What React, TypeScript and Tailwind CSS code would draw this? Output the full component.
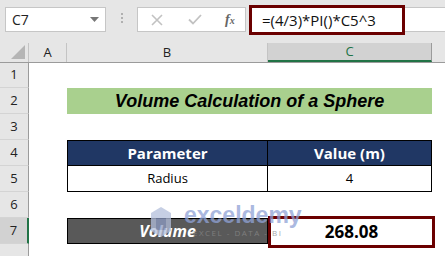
import * as React from "react";

const rows = [1, 2, 3, 4, 5, 6, 7];

function RowHead({ n, h }: { n: number; h: string }) {
  const sel = n === 7;
  return (
    <div
      className={`${h} flex items-center justify-center border-b border-[#d4d4d4] text-[13px] text-[#222] ${
        sel ? "bg-[#d2d2d2] border-r-2 border-r-[#217346]" : "bg-[#e6e6e6] border-r border-r-[#9b9b9b]"
      }`}
    >
      {n}
    </div>
  );
}

export default function App() {
  return (
    <div className="w-[445px] h-[256px] overflow-hidden bg-white relative font-['Open_Sans',sans-serif] select-none">
      {/* formula bar */}
      <div className="h-[43px] bg-[#e6e6e6] flex items-start">
        <div className="ml-[5px] mt-[7px] w-[101px] h-[25px] bg-white border border-[#c6c6c6] flex items-center justify-between px-[6px] text-[14px] text-[#222]">
          <span>C7</span>
          <svg width="9" height="5" viewBox="0 0 9 5"><path d="M0 0h9L4.5 5z" fill="#777" /></svg>
        </div>
        <div className="w-[31px] mt-[13px] flex flex-col items-center gap-[2px]">
          <span className="w-[2px] h-[2px] bg-[#b0b0b0]" />
          <span className="w-[2px] h-[2px] bg-[#b0b0b0]" />
          <span className="w-[2px] h-[2px] bg-[#b0b0b0]" />
        </div>
        <div className="mt-[7px] w-[109px] h-[25px] bg-white border border-[#c6c6c6] flex items-center pl-[13px]">
          <svg width="12" height="12" viewBox="0 0 12 12"><path d="M1 1l10 10M11 1L1 11" stroke="#c2c2c2" strokeWidth="1.6" /></svg>
          <svg className="ml-[25px]" width="14" height="11" viewBox="0 0 14 11"><path d="M1 5.5l4 4L13 1" stroke="#c2c2c2" strokeWidth="1.8" fill="none" /></svg>
          <span className="ml-[23px] text-[14px] italic font-['Liberation_Serif',serif] text-[#666] font-bold">
            f<span className="text-[10px]">x</span>
          </span>
        </div>
        <div className="ml-[3px] mt-[5px] w-[156px] h-[30px] border-[3px] border-[#6b0000] bg-white flex items-center pl-[10px] text-[15px] text-[#111]">
          =(4/3)*PI()*C5^3
        </div>
        <div className="flex-1 mt-[7px] h-[25px] bg-white border-y border-[#c6c6c6]" />
      </div>

      {/* column headers */}
      <div className="h-[20px] flex bg-[#e6e6e6] text-[13px] text-[#222] border-b border-[#9b9b9b]">
        <div className="w-[29px] border-r border-[#c4c4c4] relative">
          <svg className="absolute right-[3px] bottom-[3px]" width="14" height="14" viewBox="0 0 14 14"><path d="M14 0v14H0z" fill="#b5b5b5" /></svg>
        </div>
        <div className="w-[38px] border-r border-[#c4c4c4] flex items-center justify-center">A</div>
        <div className="w-[201px] border-r border-[#c4c4c4] flex items-center justify-center">B</div>
        <div className="w-[164px] bg-[#d2d2d2] border-r border-[#9b9b9b] border-b-2 border-b-[#217346] flex items-center justify-center text-[#217346]">C</div>
        <div className="flex-1" />
      </div>

      {/* sheet body */}
      <div className="flex">
        <div className="w-[29px] flex flex-col">
          {rows.map((n) => (
            <RowHead key={n} n={n} h={n === 1 ? "h-[25px]" : "h-[26px]"} />
          ))}
          <div className="h-[26px] bg-[#e6e6e6] border-r border-[#9b9b9b]" />
        </div>
        <div className="w-[38px]" />
        <div className="w-[365px] flex flex-col">
          <div className="h-[25px]" />
          <div className="h-[26px] bg-[#a9d08e] flex items-center justify-center font-['Liberation_Sans',sans-serif] font-bold italic text-[18px] text-black">
            Volume Calculation of a Sphere
          </div>
          <div className="h-[26px]" />
          <div className="h-[26px] bg-[#203764] border border-black flex text-white font-bold text-[15px]">
            <div className="w-[200px] border-r border-black flex items-center justify-center">Parameter</div>
            <div className="flex-1 flex items-center justify-center">Value (m)</div>
          </div>
          <div className="h-[26px] border border-t-0 border-black flex text-[13px] text-black">
            <div className="w-[200px] border-r border-black flex items-center justify-center">Radius</div>
            <div className="flex-1 flex items-center justify-center">4</div>
          </div>
          <div className="h-[26px]" />
          <div className="h-[26px] flex relative">
            <div className="w-[201px] bg-[#595959] border border-black flex items-center justify-center text-white font-bold italic text-[16px]">
              Volume
            </div>
            <div className="flex-1 relative">
              <div className="absolute left-0 -right-[3px] -top-[2px] -bottom-[4px] border-[3px] border-[#6b0000] bg-white flex items-center justify-center font-bold text-[17px] text-black">
                268.08
              </div>
            </div>
          </div>
        </div>
      </div>

      {/* watermark */}
      <div className="absolute left-[150px] top-[206px] flex items-center gap-[12px] opacity-75 pointer-events-none">
        <svg width="22" height="32" viewBox="0 0 22 32">
          <path d="M11 1L21 7v18L11 31 1 25V7z" fill="#b3bfdc" />
          <path d="M6 12h10v12H6z" fill="#8d9cc4" />
        </svg>
        <div className="flex flex-col leading-none">
          <span className="text-[23px] font-bold text-[#8fa2d6] font-['Liberation_Sans',sans-serif] -mt-[3px]">exceldemy</span>
          <span className="text-[8px] text-[#8a8a8a] tracking-[1.5px] mt-[2px] ml-[9px]">EXCEL - DATA - BI</span>
        </div>
      </div>
    </div>
  );
}
